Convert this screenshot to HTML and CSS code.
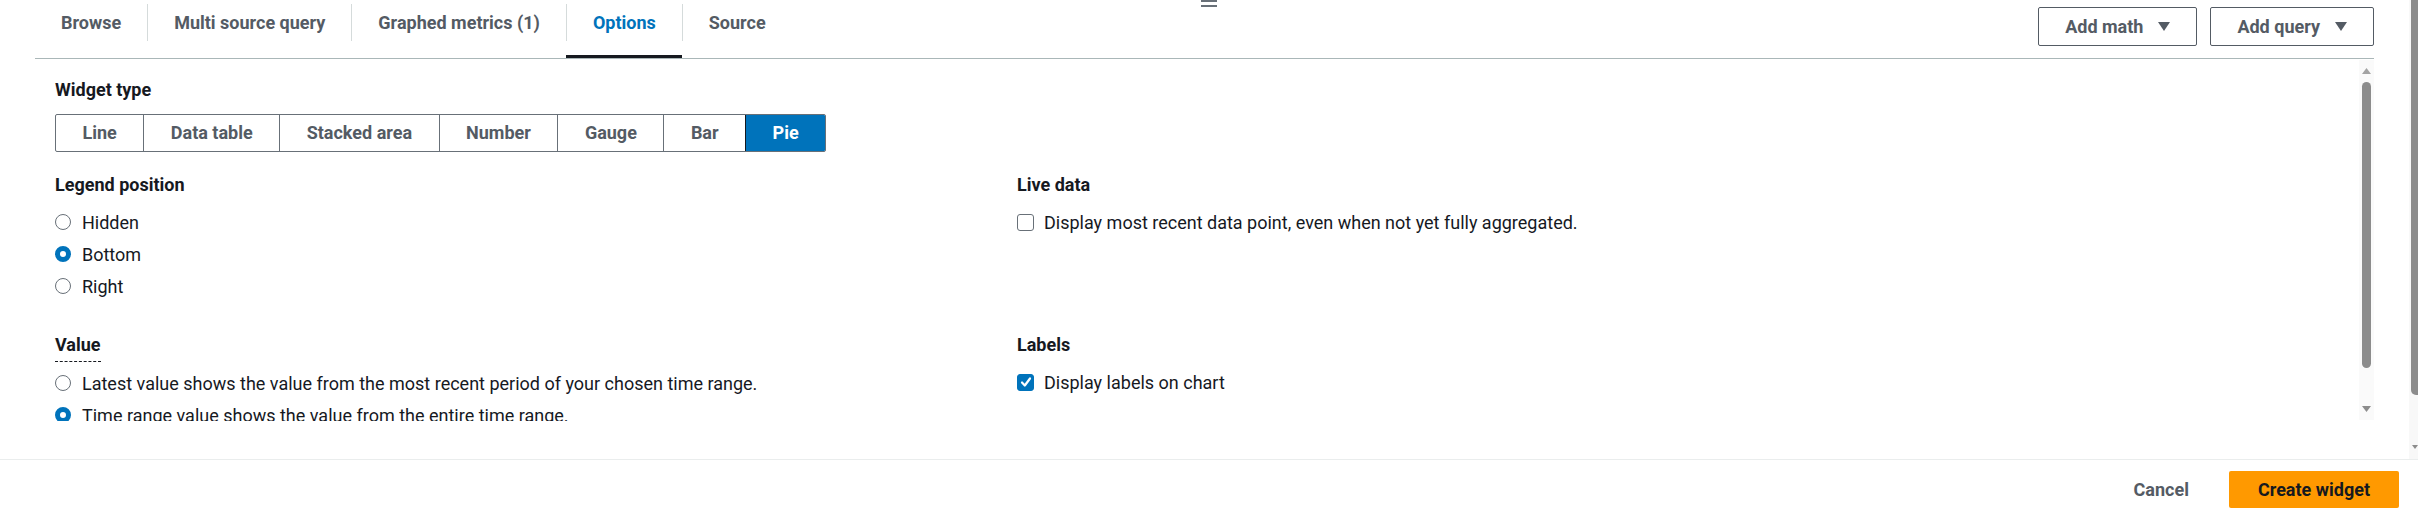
FILE: index.html
```html
<!DOCTYPE html>
<html>
<head>
<meta charset="utf-8">
<link rel="stylesheet" href="styles.css">
</head>
<body>
<div class="handle"><svg width="16" height="8" viewBox="0 0 16 8"><rect x="0" y="0" width="16" height="2" fill="#687078"/><rect x="0" y="5" width="16" height="2" fill="#687078"/></svg></div>
<div class="top">
  <div class="main">
    <div class="header">
      <div class="tabs">
        <div class="tab"><span class="tab-label">Browse</span></div>
        <div class="tab"><span class="tab-label">Multi source query</span></div>
        <div class="tab"><span class="tab-label">Graphed metrics (1)</span></div>
        <div class="tab active"><span class="tab-label">Options</span></div>
        <div class="tab"><span class="tab-label">Source</span></div>
      </div>
      <div class="actions">
        <button class="btn">Add math <svg class="caret" width="12" height="9" viewBox="0 0 12 9"><path d="M0 0 L12 0 L6 9 Z" fill="#545b64"/></svg></button>
        <button class="btn">Add query <svg class="caret" width="12" height="9" viewBox="0 0 12 9"><path d="M0 0 L12 0 L6 9 Z" fill="#545b64"/></svg></button>
      </div>
    </div>
    <div class="scroll">
      <div class="content">
        <div class="title">Widget type</div>
        <div class="seg">
          <span class="seg-item">Line</span>
          <span class="seg-item">Data table</span>
          <span class="seg-item">Stacked area</span>
          <span class="seg-item">Number</span>
          <span class="seg-item">Gauge</span>
          <span class="seg-item">Bar</span>
          <span class="seg-item on">Pie</span>
        </div>
        <div class="grid">
          <div class="field">
            <div class="title">Legend position</div>
            <div class="group">
              <div class="opt"><span class="radio"></span>Hidden</div>
              <div class="opt"><span class="radio on"></span>Bottom</div>
              <div class="opt"><span class="radio"></span>Right</div>
            </div>
          </div>
          <div class="field">
            <div class="title">Live data</div>
            <div class="group">
              <div class="opt"><span class="check"></span>Display most recent data point, even when not yet fully aggregated.</div>
            </div>
          </div>
          <div class="field">
            <div class="title info"><span class="dotted">Value</span></div>
            <div class="group group-value">
              <div class="opt"><span class="radio"></span>Latest value shows the value from the most recent period of your chosen time range.</div>
              <div class="opt"><span class="radio on"></span>Time range value shows the value from the entire time range.</div>
            </div>
          </div>
          <div class="field">
            <div class="title">Labels</div>
            <div class="group">
              <div class="opt"><span class="check on"><svg width="14" height="14" viewBox="0 0 14 14"><path d="M3 7.5 L5.8 10.5 L11 3.5" fill="none" stroke="#fff" stroke-width="2.2" stroke-linecap="round" stroke-linejoin="round"/></svg></span>Display labels on chart</div>
            </div>
          </div>
        </div>
      </div>
      <div class="vscroll">
        <div class="arrow-box"><svg width="9" height="6" viewBox="0 0 9 6"><path d="M0 6 L4.5 0 L9 6 Z" fill="#a3a3a3"/></svg></div>
        <div class="thumb"></div>
        <div class="spacer"></div>
        <div class="arrow-box"><svg width="9" height="6" viewBox="0 0 9 6"><path d="M0 0 L9 0 L4.5 6 Z" fill="#8c8c8c"/></svg></div>
      </div>
    </div>
  </div>
  <div class="outer-scroll">
    <div class="outer-thumb"></div>
    <div class="spacer"></div>
    <div class="outer-arrow"><svg width="9" height="6" viewBox="0 0 9 6"><path d="M0 0 L9 0 L4.5 6 Z" fill="#8c8c8c"/></svg></div>
  </div>
</div>
<div class="footer">
  <button class="link-btn">Cancel</button>
  <button class="primary">Create widget</button>
</div>
</body>
</html>
```

FILE: styles.css
```css
html, body {
  margin: 0;
  padding: 0;
}
body {
  width: 2418px;
  height: 516px;
  overflow: hidden;
  position: relative;
  background: #ffffff;
  font-family: Roboto, "Liberation Sans", Arial, sans-serif;
  font-size: 18px;
  color: #16191f;
}
.handle {
  position: absolute;
  top: 0;
  left: 50%;
  transform: translateX(-50%);
  line-height: 0;
}
.top {
  display: flex;
  height: 459px;
}
.main {
  flex: 1;
  min-width: 0;
  padding: 0 35px;
}
.header {
  display: flex;
  justify-content: space-between;
  height: 58px;
  border-bottom: 1px solid #aab7b8;
}
.tabs {
  display: flex;
}
.tab {
  position: relative;
  height: 58px;
}
.tab-label {
  display: block;
  margin-top: 4px;
  height: 37px;
  line-height: 37px;
  padding: 0 26px;
  font-weight: 700;
  color: #545b64;
  white-space: nowrap;
}
.tab + .tab .tab-label {
  border-left: 1px solid #d5dbdb;
}
.tab.active .tab-label {
  color: #0073bb;
}
.tab.active::after {
  content: "";
  position: absolute;
  left: 0;
  right: 0;
  bottom: 0;
  height: 3px;
  background: #16191f;
}
.actions {
  display: flex;
  gap: 13px;
  padding-top: 7px;
}
.btn {
  height: 39px;
  box-sizing: border-box;
  border: 1px solid #545b64;
  border-radius: 2px;
  background: #ffffff;
  font-family: inherit;
  font-size: 18px;
  font-weight: 700;
  color: #545b64;
  padding: 0 26px;
  display: flex;
  align-items: center;
  gap: 15px;
}
.caret {
  display: block;
}
.scroll {
  display: flex;
  height: 362px;
}
.content {
  flex: 1;
  min-width: 0;
  overflow: hidden;
  padding: 18px 0 0 20px;
}
.title {
  font-weight: 700;
  line-height: 26px;
  height: 26px;
}
.title.info {
  display: flex;
  height: auto;
}
.dotted {
  display: inline-block;
  padding-bottom: 3px;
  border-bottom: 1px dashed #16191f;
}
.seg {
  display: inline-flex;
  margin-top: 11px;
  height: 38px;
  box-sizing: border-box;
  border: 1px solid #687078;
  border-radius: 2px;
  overflow: hidden;
}
.seg-item {
  padding: 0 26.5px;
  line-height: 36px;
  font-weight: 700;
  color: #545b64;
  white-space: nowrap;
}
.seg-item + .seg-item {
  border-left: 1px solid #687078;
}
.seg-item.on {
  background: #0073bb;
  color: #ffffff;
  border-left-color: #16191f;
}
.grid {
  display: grid;
  grid-template-columns: 962px 1fr;
  row-gap: 33px;
  margin-top: 20px;
}
.group {
  display: flex;
  flex-direction: column;
  gap: 6px;
  margin-top: 11px;
}
.group-value {
  margin-top: 8px;
}
.opt {
  display: flex;
  align-items: center;
  height: 26px;
  gap: 11px;
  white-space: nowrap;
}
.radio {
  flex: none;
  width: 16px;
  height: 16px;
  box-sizing: border-box;
  border: 1.5px solid #687078;
  border-radius: 50%;
  background: #ffffff;
}
.radio.on {
  border: 5px solid #0073bb;
}
.check {
  flex: none;
  width: 17px;
  height: 17px;
  box-sizing: border-box;
  border: 1.5px solid #687078;
  border-radius: 3px;
  background: #ffffff;
  display: flex;
  align-items: center;
  justify-content: center;
  margin-right: -1px;
}
.check.on {
  background: #0073bb;
  border-color: #0073bb;
}
.check svg {
  display: block;
}
.vscroll {
  width: 15px;
  margin: 1px 0;
  background: #fafafa;
  display: flex;
  flex-direction: column;
  align-items: center;
}
.arrow-box {
  height: 22px;
  display: flex;
  align-items: center;
  justify-content: center;
}
.arrow-box svg {
  display: block;
}
.thumb {
  width: 9px;
  height: 286px;
  border-radius: 5px;
  background: #8c8c8c;
}
.spacer {
  flex: 1;
}
.outer-scroll {
  width: 9px;
  height: 459px;
  background: #f8f8f8;
  overflow: hidden;
  display: flex;
  flex-direction: column;
}
.outer-thumb {
  width: 11px;
  height: 395px;
  margin-left: 2px;
  border-radius: 0 0 5px 5px;
  background: #8c8c8c;
}
.outer-arrow {
  height: 22px;
  padding-left: 3px;
  display: flex;
  align-items: center;
  margin-bottom: 1px;
}
.outer-arrow svg {
  display: block;
}
.footer {
  height: 57px;
  box-sizing: border-box;
  border-top: 1px solid #eaeded;
  display: flex;
  justify-content: flex-end;
  align-items: flex-start;
  gap: 40px;
  padding: 11px 19px 0 0;
}
.link-btn {
  border: none;
  background: none;
  padding: 0;
  height: 37px;
  font-family: inherit;
  font-size: 18px;
  font-weight: 700;
  color: #545b64;
}
.primary {
  height: 37px;
  border: none;
  border-radius: 2px;
  background: #ff9900;
  padding: 0 29px;
  font-family: inherit;
  font-size: 18px;
  font-weight: 700;
  color: #16191f;
}
```
